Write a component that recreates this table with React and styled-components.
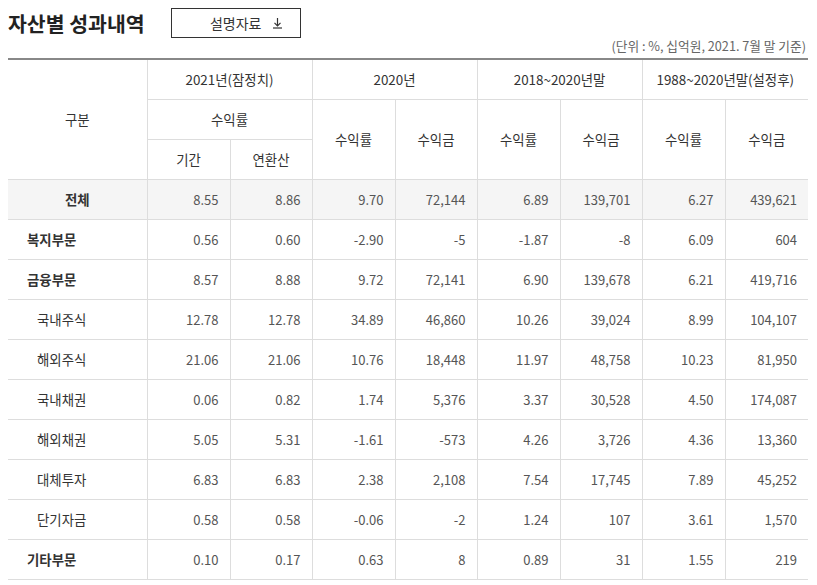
import React from 'react';
import styled, { createGlobalStyle } from 'styled-components';

const GlobalStyle = createGlobalStyle`
  body {
    margin: 0;
    background: #fff;
    font-family: "Noto Sans CJK KR", "Noto Sans", sans-serif;
  }
`;

const Page = styled.div`
  width: 800px;
  padding: 8px 0 0 8px;
`;

const TitleBar = styled.div`
  display: flex;
  align-items: center;
  height: 30px;
`;

const Title = styled.h2`
  margin: 0;
  font-size: 20.5px;
  font-weight: 700;
  color: #222;
  line-height: 30px;
`;

const GuideButton = styled.button`
  margin-left: 26px;
  width: 130px;
  height: 30px;
  border: 1px solid #333;
  background: #fff;
  display: flex;
  align-items: center;
  justify-content: center;
  gap: 11px;
  font-family: inherit;
  font-size: 14px;
  color: #333;
  padding: 0 0 0 22px;
`;

const Unit = styled.div`
  text-align: right;
  font-size: 12.7px;
  color: #666;
  padding: 0 2px 0 0;
  line-height: 16px;
`;

const Table = styled.table`
  margin-top: 4px;
  width: 800px;
  table-layout: fixed;
  border-collapse: collapse;
  border-top: 2px solid #888;
  font-size: 13px;

  th, td {
    height: 40px;
    padding: 0;
    border: 1px solid #ddd;
    box-sizing: border-box;
  }
  tr > *:first-child { border-left: none; }
  tr > *:last-child { border-right: none; }
  thead tr:first-child > * { border-top: none; }

  th {
    font-weight: 400;
    font-size: 13.4px;
    color: #333;
    text-align: center;
  }
`;

const Row = styled.tr`
  background: ${p => (p.$total ? '#f5f5f5' : '#fff')};
`;

const Label = styled.td`
  color: #333;
  font-size: 13.4px;
  font-weight: ${p => (p.$level === 2 ? 400 : 700)};
  text-align: ${p => (p.$level === 0 ? 'center' : 'left')};
  padding-left: ${p => (p.$level === 1 ? '19px' : p.$level === 2 ? '29px' : '0')} !important;
`;

const Num = styled.td`
  color: #555;
  text-align: right;
  padding-right: 11px !important;
`;

const rows = [
  ['전체', 0, '8.55', '8.86', '9.70', '72,144', '6.89', '139,701', '6.27', '439,621'],
  ['복지부문', 1, '0.56', '0.60', '-2.90', '-5', '-1.87', '-8', '6.09', '604'],
  ['금융부문', 1, '8.57', '8.88', '9.72', '72,141', '6.90', '139,678', '6.21', '419,716'],
  ['국내주식', 2, '12.78', '12.78', '34.89', '46,860', '10.26', '39,024', '8.99', '104,107'],
  ['해외주식', 2, '21.06', '21.06', '10.76', '18,448', '11.97', '48,758', '10.23', '81,950'],
  ['국내채권', 2, '0.06', '0.82', '1.74', '5,376', '3.37', '30,528', '4.50', '174,087'],
  ['해외채권', 2, '5.05', '5.31', '-1.61', '-573', '4.26', '3,726', '4.36', '13,360'],
  ['대체투자', 2, '6.83', '6.83', '2.38', '2,108', '7.54', '17,745', '7.89', '45,252'],
  ['단기자금', 2, '0.58', '0.58', '-0.06', '-2', '1.24', '107', '3.61', '1,570'],
  ['기타부문', 1, '0.10', '0.17', '0.63', '8', '0.89', '31', '1.55', '219'],
];

const widths = [139, 83, 82, 83, 82, 83, 82, 83, 83];

function DownloadIcon() {
  return (
    <svg width="11" height="12" viewBox="0 0 11 12" fill="none" stroke="#333" strokeWidth="1.2">
      <path d="M5.5 1v7.5" />
      <path d="M2.5 5.8l3 3 3-3" />
      <path d="M1 11h9" />
    </svg>
  );
}

export default function App() {
  return (
    <Page>
      <GlobalStyle />
      <TitleBar>
        <Title>자산별 성과내역</Title>
        <GuideButton>설명자료 <DownloadIcon /></GuideButton>
      </TitleBar>
      <Unit>(단위 : %, 십억원, 2021. 7월 말 기준)</Unit>
      <Table>
        <colgroup>
          {widths.map((w, i) => <col key={i} style={{ width: w }} />)}
        </colgroup>
        <thead>
          <tr>
            <th rowSpan={3}>구분</th>
            <th colSpan={2}>2021년(잠정치)</th>
            <th colSpan={2}>2020년</th>
            <th colSpan={2}>2018~2020년말</th>
            <th colSpan={2}>1988~2020년말(설정후)</th>
          </tr>
          <tr>
            <th colSpan={2}>수익률</th>
            <th rowSpan={2}>수익률</th>
            <th rowSpan={2}>수익금</th>
            <th rowSpan={2}>수익률</th>
            <th rowSpan={2}>수익금</th>
            <th rowSpan={2}>수익률</th>
            <th rowSpan={2}>수익금</th>
          </tr>
          <tr>
            <th>기간</th>
            <th>연환산</th>
          </tr>
        </thead>
        <tbody>
          {rows.map(([label, level, ...nums]) => (
            <Row key={label} $total={level === 0}>
              <Label $level={level}>{label}</Label>
              {nums.map((n, i) => <Num key={i}>{n}</Num>)}
            </Row>
          ))}
        </tbody>
      </Table>
    </Page>
  );
}
